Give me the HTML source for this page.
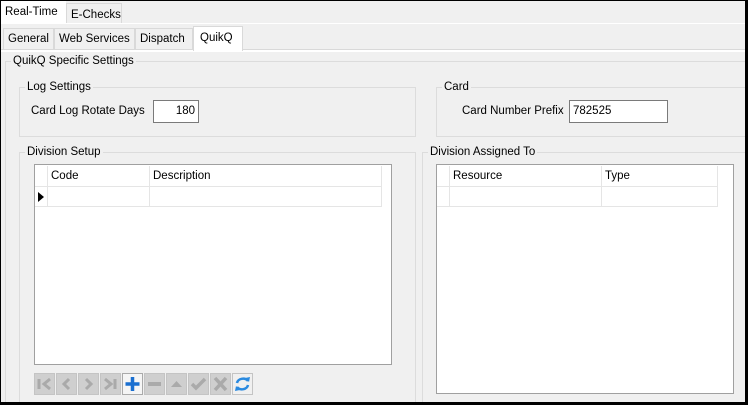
<!DOCTYPE html><html><head><style>
*{margin:0;padding:0;box-sizing:border-box}
html,body{overflow:hidden}
body{width:748px;height:405px;background:#000;position:relative;font-family:"Liberation Sans",sans-serif;font-size:11.5px;color:#000}
.a{position:absolute}
.bg{left:1px;top:1px;width:744px;height:401px;background:#f0f0f0}
.tab{position:absolute;border:1px solid #d9d9d9;border-bottom:none;background:#f0f0f0;padding:0 4px;line-height:21px;white-space:nowrap}
.sel{background:#fff;z-index:2}
.hl{position:absolute;height:1px;background:#d9d9d9}
.gb{position:absolute;border:1px solid #dcdcdc}
.gt{position:absolute;background:#f0f0f0;padding:0 2px;line-height:15px;white-space:nowrap}
.inp{position:absolute;background:#fff;border:1px solid #7a7a7a;line-height:21px;padding:0 3px}
.grid{position:absolute;background:#fff;border:1px solid #a0a0a0}
.c{position:absolute;border-right:1px solid #e5e5e5;border-bottom:1px solid #e5e5e5;line-height:21px;padding-left:3px}
.btn{position:absolute;top:373px;width:21px;height:22px;background:#cfcfcf;border:1px solid #c4c4c4}
</style></head><body>
<div class="a bg"></div>
<div class="a" style="left:1px;top:1px;width:744px;height:23px;background:#f0f0f0"></div>
<div class="tab sel" style="left:1px;top:1px;height:23px;width:65px;border:none;padding-left:4px;line-height:23px">Real-Time</div>
<div class="tab" style="left:66px;top:3px;height:21px;width:56px;line-height:22px">E-Checks</div>
<div class="hl" style="left:1px;top:23px;width:744px;background:#fff"></div>
<div class="tab" style="left:3px;top:28px;height:22px;width:51px">General</div>
<div class="tab" style="left:54px;top:28px;height:22px;width:81px">Web Services</div>
<div class="tab" style="left:135px;top:28px;height:22px;width:58px">Dispatch</div>
<div class="tab sel" style="left:193px;top:26px;height:25px;width:50px;padding-left:6px;line-height:22px">QuikQ</div>
<div class="hl" style="left:1px;top:49px;width:744px"></div>
<div class="hl" style="left:1px;top:50px;width:744px;background:#fff;height:2px"></div>
<div class="gb" style="left:5px;top:61px;width:745px;height:345px"></div>
<div class="gt" style="left:11px;top:54px">QuikQ Specific Settings</div>
<div class="gb" style="left:19px;top:87px;width:397px;height:50px"></div>
<div class="gt" style="left:25px;top:80px">Log Settings</div>
<div class="a" style="left:31px;top:105px">Card Log Rotate Days</div>
<div class="inp" style="left:153px;top:100px;width:46px;height:23px;text-align:right">180</div>
<div class="gb" style="left:436px;top:87px;width:320px;height:50px"></div>
<div class="gt" style="left:442px;top:80px">Card</div>
<div class="a" style="left:462px;top:105px">Card Number Prefix</div>
<div class="inp" style="left:569px;top:100px;width:99px;height:23px">782525</div>
<div class="gb" style="left:19px;top:152px;width:397px;height:255px"></div>
<div class="gt" style="left:25px;top:145px">Division Setup</div>
<div class="grid" style="left:34px;top:164px;width:358px;height:201px">
<div class="c" style="left:0;top:1px;width:13px;height:21px"></div>
<div class="c" style="left:13px;top:1px;width:102px;height:21px">Code</div>
<div class="c" style="left:115px;top:1px;width:232px;height:21px">Description</div>
<div class="c" style="left:0;top:22px;width:13px;height:20px"><span style="position:absolute;left:3px;top:5px;width:0;height:0;border-left:6px solid #000;border-top:5px solid transparent;border-bottom:5px solid transparent"></span></div>
<div class="c" style="left:13px;top:22px;width:102px;height:20px"></div>
<div class="c" style="left:115px;top:22px;width:232px;height:20px"></div>
</div>
<div class="btn" style="left:34px"><svg width="19" height="20"><path d="M4 5v10M15 5l-6 5 6 5" stroke="#aaa" stroke-width="3" fill="none"/></svg></div>
<div class="btn" style="left:56px"><svg width="19" height="20"><path d="M12 5l-5 5 5 5" stroke="#aaa" stroke-width="3" fill="none"/></svg></div>
<div class="btn" style="left:78px"><svg width="19" height="20"><path d="M7 5l5 5-5 5" stroke="#aaa" stroke-width="3" fill="none"/></svg></div>
<div class="btn" style="left:100px"><svg width="19" height="20"><path d="M14 5v10M4 5l6 5-6 5" stroke="#aaa" stroke-width="3" fill="none"/></svg></div>
<div class="btn" style="left:122px;background:#f5f5f5;border-color:#aaa"><svg width="19" height="20"><path d="M9.5 3v14M2.5 10h14" stroke="#1a6fd0" stroke-width="3.5"/></svg></div>
<div class="btn" style="left:144px"><svg width="19" height="20"><rect x="3" y="8" width="13" height="4" fill="#aaa"/></svg></div>
<div class="btn" style="left:166px"><svg width="19" height="20"><path d="M4 13l5.5-6 5.5 6z" fill="#aaa"/></svg></div>
<div class="btn" style="left:188px"><svg width="19" height="20"><path d="M3 10l4 4 9-9" stroke="#aaa" stroke-width="3.5" fill="none"/></svg></div>
<div class="btn" style="left:210px"><svg width="19" height="20"><path d="M4 4l11 12M15 4L4 16" stroke="#aaa" stroke-width="3.5"/></svg></div>
<div class="btn" style="left:232px;background:#f0f0f0"><svg width="19" height="20"><path d="M4 9a6 5 0 0 1 11-2M15 11a6 5 0 0 1-11 2" stroke="#2a8ae0" stroke-width="2.5" fill="none"/><path d="M12 4l4 4 1-5zM7 16l-4-4-1 5z" fill="#2a8ae0"/></svg></div>
<div class="gb" style="left:422px;top:152px;width:340px;height:255px"></div>
<div class="gt" style="left:428px;top:145px">Division Assigned To</div>
<div class="grid" style="left:436px;top:164px;width:298px;height:230px">
<div class="c" style="left:0;top:1px;width:13px;height:21px"></div>
<div class="c" style="left:13px;top:1px;width:152px;height:21px">Resource</div>
<div class="c" style="left:165px;top:1px;width:116px;height:21px">Type</div>
<div class="c" style="left:0;top:22px;width:13px;height:20px"></div>
<div class="c" style="left:13px;top:22px;width:152px;height:20px"></div>
<div class="c" style="left:165px;top:22px;width:116px;height:20px"></div>
</div>
<div class="a" style="left:745px;top:0;width:3px;height:405px;background:#000"></div>
<div class="a" style="left:0;top:402px;width:748px;height:3px;background:#000"></div>
<div class="a" style="left:0;top:0;width:1px;height:405px;background:#000"></div>
<div class="a" style="left:0;top:0;width:748px;height:1px;background:#000"></div>
</body></html>
